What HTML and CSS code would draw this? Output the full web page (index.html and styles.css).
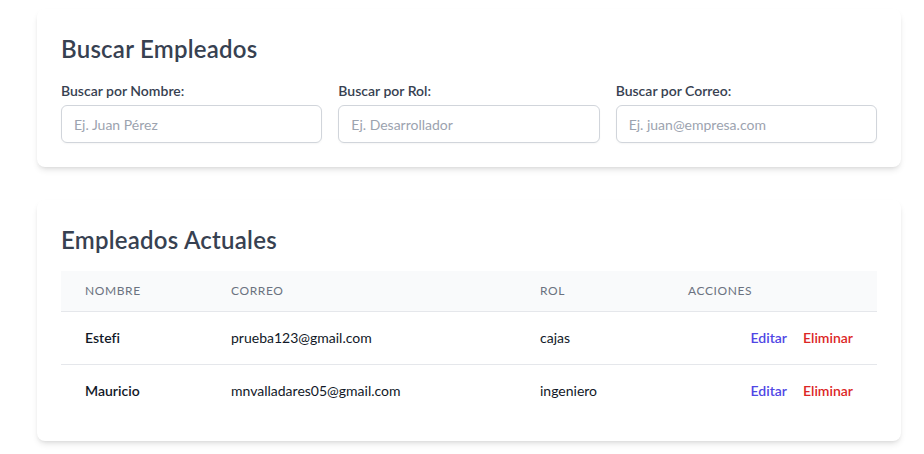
FILE: index.html
```html
<!DOCTYPE html>
<html lang="es">
<head>
<meta charset="utf-8">
<title>Empleados</title>
<link rel="stylesheet" href="styles.css">
</head>
<body>
<main class="page">
  <section class="card search-card">
    <h2 class="card-title">Buscar Empleados</h2>
    <div class="search-grid">
      <div class="field">
        <label class="field-label">Buscar por Nombre:</label>
        <input class="field-input" type="text" placeholder="Ej. Juan Pérez">
      </div>
      <div class="field">
        <label class="field-label">Buscar por Rol:</label>
        <input class="field-input" type="text" placeholder="Ej. Desarrollador">
      </div>
      <div class="field">
        <label class="field-label">Buscar por Correo:</label>
        <input class="field-input" type="text" placeholder="Ej. juan@empresa.com">
      </div>
    </div>
  </section>

  <section class="card list-card">
    <h2 class="card-title list-title">Empleados Actuales</h2>
    <table class="emp-table">
      <colgroup>
        <col class="col-name">
        <col class="col-mail">
        <col class="col-role">
        <col class="col-actions">
      </colgroup>
      <thead>
        <tr>
          <th>Nombre</th>
          <th>Correo</th>
          <th>Rol</th>
          <th>Acciones</th>
        </tr>
      </thead>
      <tbody>
        <tr>
          <td class="cell-name">Estefi</td>
          <td>prueba123@gmail.com</td>
          <td>cajas</td>
          <td class="cell-actions"><a class="act edit">Editar</a><a class="act del">Eliminar</a></td>
        </tr>
        <tr>
          <td class="cell-name">Mauricio</td>
          <td>mnvalladares05@gmail.com</td>
          <td>ingeniero</td>
          <td class="cell-actions"><a class="act edit">Editar</a><a class="act del">Eliminar</a></td>
        </tr>
      </tbody>
    </table>
  </section>
</main>
</body>
</html>
```

FILE: styles.css
```css
* { box-sizing: border-box; }
html, body { margin: 0; padding: 0; background: #ffffff; }
body {
  font-family: Lato, "Noto Sans", sans-serif;
  font-variant-ligatures: none;
  color: #111827;
}
.page {
  padding: 9px 23px 20px 37px;
}
.card {
  background: #fff;
  border-radius: 8px;
  box-shadow: 0 4px 6px -1px rgba(0,0,0,0.1), 0 2px 4px -2px rgba(0,0,0,0.1);
  padding: 24px;
}
.search-card { margin-bottom: 33px; }
.card-title {
  margin: 0 0 16px;
  font-size: 24px;
  line-height: 32px;
  font-weight: 600;
  letter-spacing: 0.01em;
  color: #374151;
}
.list-title { margin-bottom: 15px; }
.search-grid {
  display: grid;
  grid-template-columns: 1fr 1fr 1fr;
  gap: 16px;
}
.field { display: flex; flex-direction: column; }
.field-label {
  font-size: 14px;
  line-height: 20px;
  font-weight: 600;
  color: #374151;
  margin-bottom: 4px;
}
.field-input {
  height: 38px;
  border: 1px solid #d1d5db;
  border-radius: 6px;
  padding: 8px 12px;
  font-family: inherit;
  font-size: 14px;
  color: #111827;
  outline: none;
  box-shadow: 0 1px 2px rgba(0,0,0,0.04);
}
.field-input::placeholder { color: #9ca3af; }
.emp-table {
  width: 100%;
  border-collapse: collapse;
  table-layout: fixed;
}
.col-name { width: 146px; }
.col-mail { width: 309px; }
.col-role { width: 148px; }
.emp-table thead tr { background: #f9fafb; }
.emp-table th {
  text-align: left;
  font-size: 12px;
  line-height: 16px;
  font-weight: 400;
  text-transform: uppercase;
  letter-spacing: 0.05em;
  color: #6b7280;
  padding: 12px 24px;
  border-bottom: 1px solid #e5e7eb;
}
.emp-table td {
  font-size: 14px;
  line-height: 20px;
  padding: 16px 24px;
  color: #111827;
  white-space: nowrap;
}
.emp-table tbody tr + tr td { border-top: 1px solid #e5e7eb; }
.cell-name { font-weight: 600; }
.cell-actions { text-align: right; }
.act { font-weight: 600; cursor: pointer; }
.edit { color: #4f46e5; }
.del { color: #dc2626; margin-left: 16px; }
```
